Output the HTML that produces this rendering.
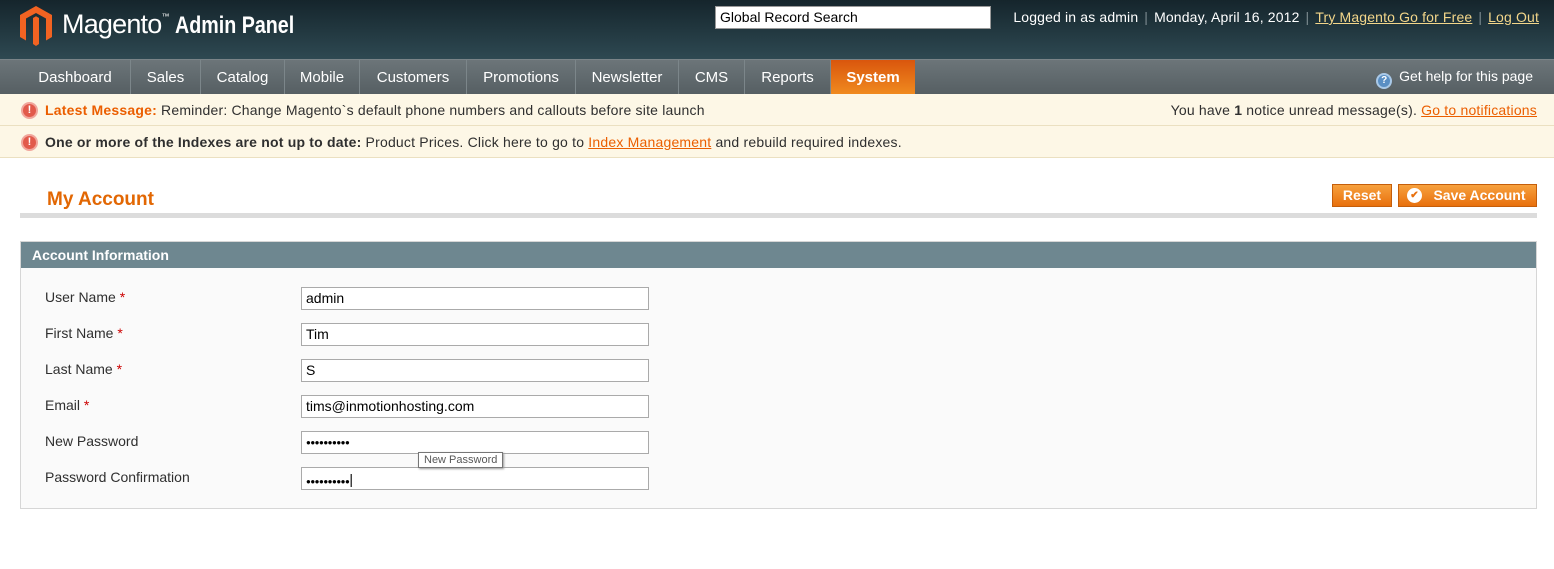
<!DOCTYPE html>
<html><head><meta charset="utf-8"><style>
*{margin:0;padding:0;box-sizing:border-box}
body{width:1554px;height:569px;background:#fff;font-family:"Liberation Sans",Arial,sans-serif;font-size:14px;color:#2f2f2f;position:relative;overflow:hidden}
.hdr{position:absolute;left:0;top:0;width:1554px;height:59px;background:linear-gradient(#15252c,#2e4952)}
.logo{position:absolute;left:20px;top:6px}
.brand{position:absolute;left:62px;top:9px;color:#fff;font-size:27px;letter-spacing:-0.8px;white-space:nowrap}
.brand b{display:inline-block;font-size:24px;font-weight:bold;letter-spacing:0;transform:scaleX(0.82);transform-origin:left}
.search{position:absolute;left:715px;top:6px;width:276px;height:23px;background:#fff;border:1px solid #999;color:#000;padding:2px 4px;font-size:14px}
.top{position:absolute;right:15px;top:9px;color:#fff;font-size:14px;letter-spacing:0.15px}
.top .s{color:#7d8b90;margin:0 6px}
.top a{color:#f3d68a;text-decoration:underline}
.nav{position:absolute;left:0;top:59px;width:1554px;height:35px;background:linear-gradient(#6c7579,#565f63);border-top:1px solid #7a8488}
.nav span{position:absolute;top:0;height:34px;line-height:35px;color:#fff;font-size:15px;text-align:center;border-right:1px solid #7c868a}
.nav .sys{background:linear-gradient(#d9560d,#f08a1f);font-weight:bold;border:none}
.help{position:absolute;right:21px;top:8px;color:#fff;font-size:14px}
.help i{display:inline-block;width:16px;height:16px;border-radius:50%;background:#5a8fc4;border:2px solid #a9c9e8;color:#fff;font-size:10px;line-height:12px;text-align:center;font-style:normal;font-weight:bold;margin-right:7px;vertical-align:-2px}
.msg{position:absolute;left:0;width:1554px;height:32px;background:#fdf7e6;border-bottom:1px solid #ebe0c1;font-size:14px;line-height:33px;padding-left:45px;letter-spacing:0.2px}
.ic{position:absolute;left:21px;top:8px;width:17px;height:17px;border-radius:50%;background:#e25a4b;border:2px solid #f1a69c;color:#fff;font-size:11px;line-height:13px;text-align:center;font-weight:bold}
.msg .r{position:absolute;right:17px;top:0}
a.o{color:#eb5e00;text-decoration:underline}
h1{position:absolute;left:47px;top:189px;font-size:19px;color:#e26703;font-weight:bold}
.hr{position:absolute;left:20px;top:213px;width:1517px;height:5px;background:#dcdcdc}
.btn{position:absolute;top:184px;height:23px;background:linear-gradient(#f7a13e,#e8700d);border:1px solid #c55e0a;color:#fff;font-weight:bold;font-size:14px;line-height:21px;text-align:center}
.fs{position:absolute;left:20px;top:241px;width:1517px;height:268px;background:#fafafa;border:1px solid #d6d6d6}
.fh{height:26px;background:#6e8790;color:#fff;font-weight:bold;font-size:14px;line-height:26px;padding-left:11px}
.lb{position:absolute;left:24px;font-size:14px;color:#2f2f2f}
.lb em{color:#c00;font-style:normal}
.in{position:absolute;left:280px;width:348px;height:23px;background:#fff;border:1px solid #aaa;font-size:14px;padding:2px 4px;color:#000}
.pw{font-size:8px;line-height:18px;letter-spacing:-0.5px}
.tip{position:absolute;left:418px;top:452px;background:#fff;border:1px solid #767676;font-size:11px;padding:1px 5px;color:#575757;box-shadow:1px 1px 2px #999}
</style></head><body>
<div class="hdr">
<svg class="logo" width="32" height="40" viewBox="0 0 32 40"><path d="M16 0L32 9V31L26 34.5V12.5L16 7 6 12.5V34.5L0 31V9Z" fill="#f26322"/><path d="M13 12l3-1.7 3 1.7V38l-3 2-3-2Z" fill="#f26322"/></svg>
<div class="brand">Magento<sup style="font-size:8px;vertical-align:14px">™</sup> <b>Admin Panel</b></div>
<div class="search">Global Record Search</div>
<div class="top">Logged in as admin<span class="s">|</span>Monday, April 16, 2012<span class="s">|</span><a>Try Magento Go for Free</a><span class="s">|</span><a>Log Out</a></div>
</div>
<div class="nav">
<span style="left:20px;width:111px">Dashboard</span>
<span style="left:131px;width:70px">Sales</span>
<span style="left:201px;width:84px">Catalog</span>
<span style="left:285px;width:75px">Mobile</span>
<span style="left:360px;width:107px">Customers</span>
<span style="left:467px;width:109px">Promotions</span>
<span style="left:576px;width:103px">Newsletter</span>
<span style="left:679px;width:66px">CMS</span>
<span style="left:745px;width:86px">Reports</span>
<span class="sys" style="left:831px;width:84px">System</span>
<div class="help"><i>?</i>Get help for this page</div>
</div>
<div class="msg" style="top:94px"><div class="ic">!</div><b style="color:#eb5e00">Latest Message:</b> Reminder: Change Magento`s default phone numbers and callouts before site launch<span class="r">You have <b>1</b> notice unread message(s). <a class="o">Go to notifications</a></span></div>
<div class="msg" style="top:126px"><div class="ic">!</div><b>One or more of the Indexes are not up to date:</b> Product Prices. Click here to go to <a class="o">Index Management</a> and rebuild required indexes.</div>
<h1>My Account</h1>
<div class="btn" style="left:1332px;width:60px">Reset</div>
<div class="btn" style="left:1398px;width:139px;padding-left:24px"><span style="position:absolute;left:8px;top:3px;width:15px;height:15px;border-radius:50%;background:#fff;color:#e8700d;font-size:10px;line-height:15px">✔</span>Save Account</div>
<div class="hr"></div>
<div class="fs"><div class="fh">Account Information</div>
<div class="lb" style="top:47px">User Name <em>*</em></div><div class="in" style="top:45px">admin</div>
<div class="lb" style="top:83px">First Name <em>*</em></div><div class="in" style="top:81px">Tim</div>
<div class="lb" style="top:119px">Last Name <em>*</em></div><div class="in" style="top:117px">S</div>
<div class="lb" style="top:155px">Email <em>*</em></div><div class="in" style="top:153px">tims@inmotionhosting.com</div>
<div class="lb" style="top:191px">New Password</div><div class="in pw" style="top:189px">●●●●●●●●●●</div>
<div class="lb" style="top:227px">Password Confirmation</div><div class="in pw" style="top:225px">●●●●●●●●●●<span style="font-size:14px">|</span></div>
</div>
<div class="tip">New Password</div>
</body></html>
